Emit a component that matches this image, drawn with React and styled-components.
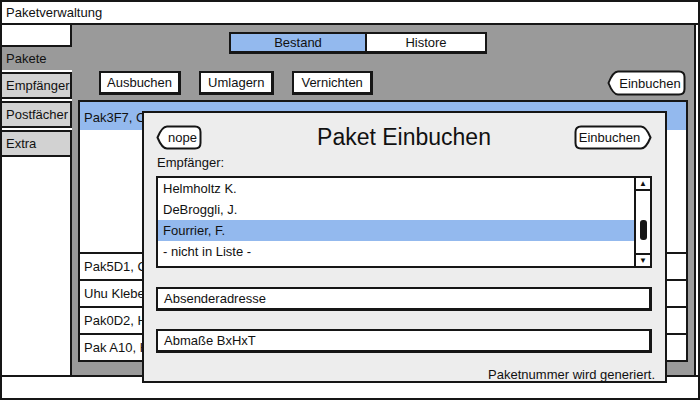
import styled, { createGlobalStyle } from "styled-components";

const Global = createGlobalStyle`
  body {
    margin: 0;
    background: #fff;
    font-family: "Liberation Sans", Arial, sans-serif;
    color: #111;
  }
`;

const INK = "#161616";
const GRAY = "#9a9a9a";
const BLUE = "#93b9ee";

const Window = styled.div`
  position: relative;
  width: 700px;
  height: 400px;
  box-sizing: border-box;
  border: 2px solid ${INK};
  display: flex;
  flex-direction: column;
  background: #fff;
  font-size: 13px;
`;

const TitleBar = styled.div`
  height: 21px;
  line-height: 21px;
  padding-left: 4px;
  border-bottom: 2px solid ${INK};
`;

const Body = styled.div`
  flex: 1;
  display: flex;
  min-height: 0;
`;

const StatusBar = styled.div`
  height: 21px;
  border-top: 2px solid ${INK};
`;

const Sidebar = styled.div`
  width: 70px;
  display: flex;
  flex-direction: column;
`;

const SideBlank = styled.div`
  height: 20px;
  border-right: 2px solid ${INK};
  border-bottom: 2px solid ${INK};
`;

const SideTab = styled.div`
  flex-shrink: 0;
  height: 23px;
  line-height: 23px;
  padding-left: 4px;
  white-space: nowrap;
  overflow: hidden;
  background: ${(p) => (p.$active ? GRAY : "#d2d2d2")};
  border-right: ${(p) => (p.$active ? "none" : `2px solid ${INK}`)};
  border-top: ${(p) => (p.$active ? "none" : `2px solid ${INK}`)};
  border-bottom: ${(p) => (p.$active ? "none" : `2px solid ${INK}`)};
  margin-top: ${(p) => (p.$active ? 0 : 2)}px;
`;

const SideFill = styled.div`
  flex: 1;
  border-right: 2px solid ${INK};
`;

const Main = styled.div`
  flex: 1;
  background: ${GRAY};
  border-right: 2px solid ${INK};
  margin-right: 2px;
  padding: 7px 6px 13px 6px;
  display: flex;
  flex-direction: column;
`;

const TabGroup = styled.div`
  display: flex;
  margin-left: 151px;
`;

const Tab = styled.div`
  box-sizing: border-box;
  width: ${(p) => p.$w}px;
  height: 22px;
  line-height: 17px;
  text-align: center;
  background: ${(p) => (p.$on ? BLUE : "#fff")};
  border: 2px solid ${INK};
  border-left-width: ${(p) => (p.$first ? 2 : 0)}px;
  border-bottom-width: 3px;
`;

const Toolbar = styled.div`
  display: flex;
  align-items: center;
  gap: 18px;
  margin-top: 16px;
  padding: 0 2px 0 21px;
`;

const Button = styled.div`
  height: 19px;
  line-height: 19px;
  padding: 0 ${(p) => p.$px}px;
  background: #fff;
  border: 2px solid ${INK};
  border-right-width: 3px;
  border-bottom-width: 3px;
`;

const Spacer = styled.div`
  flex: 1;
`;

const List = styled.div`
  margin-top: 4px;
  flex: 1;
  border: 2px solid ${INK};
  display: flex;
  flex-direction: column;
  background: #fff;
`;

const Expanded = styled.div`
  height: 150px;
  border-bottom: 2px solid ${INK};
  display: flex;
  flex-direction: column;
`;

const Row = styled.div`
  height: ${(p) => p.$h || 25}px;
  line-height: ${(p) => p.$lh || p.$h || 25}px;
  padding-left: 4px;
  white-space: nowrap;
  overflow: hidden;
  background: ${(p) => (p.$sel ? BLUE : "#fff")};
  border-bottom: ${(p) => (p.$line ? `2px solid ${INK}` : "none")};
`;

const Modal = styled.div`
  position: absolute;
  left: 140px;
  top: 109px;
  width: 525px;
  height: 272px;
  box-sizing: border-box;
  border: 2px solid ${INK};
  background: #ededed;
  padding: 12px 13px 0 12px;
  display: flex;
  flex-direction: column;
  & > * {
    flex-shrink: 0;
  }
`;

const ModalHead = styled.div`
  display: grid;
  grid-template-columns: 1fr auto 1fr;
  align-items: center;
  height: 25px;
`;

const ModalTitle = styled.div`
  font-size: 23px;
  line-height: 25px;
`;

const HeadRight = styled.div`
  display: flex;
  justify-content: flex-end;
`;

const Label = styled.div`
  margin-top: 5px;
  line-height: 15px;
  padding-left: 1px;
`;

const ListBox = styled.div`
  margin-top: 6px;
  height: 88px;
  border: 2px solid ${INK};
  background: #fff;
  display: flex;
`;

const ListItems = styled.div`
  flex: 1;
  padding-top: 0;
`;

const ListItem = styled.div`
  height: 21px;
  line-height: 21px;
  padding-left: 5px;
  background: ${(p) => (p.$sel ? BLUE : "transparent")};
`;

const Scroll = styled.div`
  width: 14px;
  border-left: 2px solid ${INK};
  display: flex;
  flex-direction: column;
`;

const ScrollArrow = styled.div`
  height: 11px;
  font-size: 8px;
  line-height: 11px;
  text-align: center;
  border-top: ${(p) => (p.$down ? `2px solid ${INK}` : "none")};
  border-bottom: ${(p) => (p.$down ? "none" : `2px solid ${INK}`)};
`;

const ScrollTrack = styled.div`
  flex: 1;
  display: flex;
  flex-direction: column;
  align-items: center;
  padding-top: 29px;
`;

const Thumb = styled.div`
  width: 7px;
  height: 20px;
  border-radius: 3px;
  background: ${INK};
`;

const Field = styled.div`
  margin-top: ${(p) => p.$mt}px;
  height: 19px;
  line-height: 19px;
  padding-left: 6px;
  background: #fff;
  border: 2px solid ${INK};
  border-right-width: 3px;
  border-bottom-width: 3px;
`;

const Note = styled.div`
  margin-top: 14px;
  margin-right: -3px;
  text-align: right;
  line-height: 16px;
`;

const ShapeWrap = styled.div`
  position: relative;
  width: ${(p) => p.$w}px;
  height: ${(p) => p.$h}px;
  display: flex;
  align-items: center;
  justify-content: center;
  box-sizing: border-box;
  padding: ${(p) => (p.$dir === "left" ? "0 0 0 7px" : "0 7px 0 0")};
`;

const ShapeSvg = styled.svg`
  position: absolute;
  inset: 0;
`;

const ShapeLabel = styled.span`
  position: relative;
`;

function PointButton({ w, h = 25, dir = "left", children }) {
  const m = h / 2;
  const d = `M11 1.5 H${w - 7} Q${w - 1.5} 1.5 ${w - 1.5} 7 V${h - 7} Q${w - 1.5} ${h - 1.5} ${w - 7} ${h - 1.5} H11 Q6 ${h - 1.5} 1.5 ${m} Q6 1.5 11 1.5 Z`;
  return (
    <ShapeWrap $w={w} $h={h} $dir={dir}>
      <ShapeSvg width={w} height={h} viewBox={`0 0 ${w} ${h}`}>
        <path
          d={d}
          fill="#fff"
          stroke={INK}
          strokeWidth="2"
          transform={dir === "right" ? `translate(${w} 0) scale(-1 1)` : undefined}
        />
      </ShapeSvg>
      <ShapeLabel>{children}</ShapeLabel>
    </ShapeWrap>
  );
}

const rows = [
  "Pak5D1, Curie M., Fach 3",
  "Uhu Klebestift, Lager 2",
  "Pak0D2, Helmholtz K., Fach 7",
  "Pak A10, Helmholtz K., Fach 9",
];

export default function App() {
  return (
    <>
      <Global />
      <Window>
        <TitleBar>Paketverwaltung</TitleBar>
        <Body>
          <Sidebar>
            <SideBlank />
            <SideTab $active>Pakete</SideTab>
            <SideTab>Empfänger</SideTab>
            <SideTab>Postfächer</SideTab>
            <SideTab>Extra</SideTab>
            <SideFill />
          </Sidebar>
          <Main>
            <TabGroup>
              <Tab $w={138} $on $first>
                Bestand
              </Tab>
              <Tab $w={120}>Histore</Tab>
            </TabGroup>
            <Toolbar>
              <Button $px={6}>Ausbuchen</Button>
              <Button $px={7}>Umlagern</Button>
              <Button $px={7}>Vernichten</Button>
              <Spacer />
              <PointButton w={79} h={26} dir="left">
                Einbuchen
              </PointButton>
            </Toolbar>
            <List>
              <Expanded>
                <Row $sel $h={28} $lh={32}>
                  Pak3F7, Curie M., Fach 12
                </Row>
              </Expanded>
              {rows.map((r, i) => (
                <Row key={r} $line={i < rows.length - 1}>
                  {r}
                </Row>
              ))}
            </List>
          </Main>
        </Body>
        <StatusBar />
        <Modal>
          <ModalHead>
            <div>
              <PointButton w={46} dir="left">
                nope
              </PointButton>
            </div>
            <ModalTitle>Paket Einbuchen</ModalTitle>
            <HeadRight>
              <PointButton w={78} dir="right">
                Einbuchen
              </PointButton>
            </HeadRight>
          </ModalHead>
          <Label>Empfänger:</Label>
          <ListBox>
            <ListItems>
              <ListItem>Helmholtz K.</ListItem>
              <ListItem>DeBroggli, J.</ListItem>
              <ListItem $sel>Fourrier, F.</ListItem>
              <ListItem>- nicht in Liste -</ListItem>
            </ListItems>
            <Scroll>
              <ScrollArrow>▲</ScrollArrow>
              <ScrollTrack>
                <Thumb />
              </ScrollTrack>
              <ScrollArrow $down>▼</ScrollArrow>
            </Scroll>
          </ListBox>
          <Field $mt={19}>Absenderadresse</Field>
          <Field $mt={18}>Abmaße BxHxT</Field>
          <Note>Paketnummer wird generiert.</Note>
        </Modal>
      </Window>
    </>
  );
}
